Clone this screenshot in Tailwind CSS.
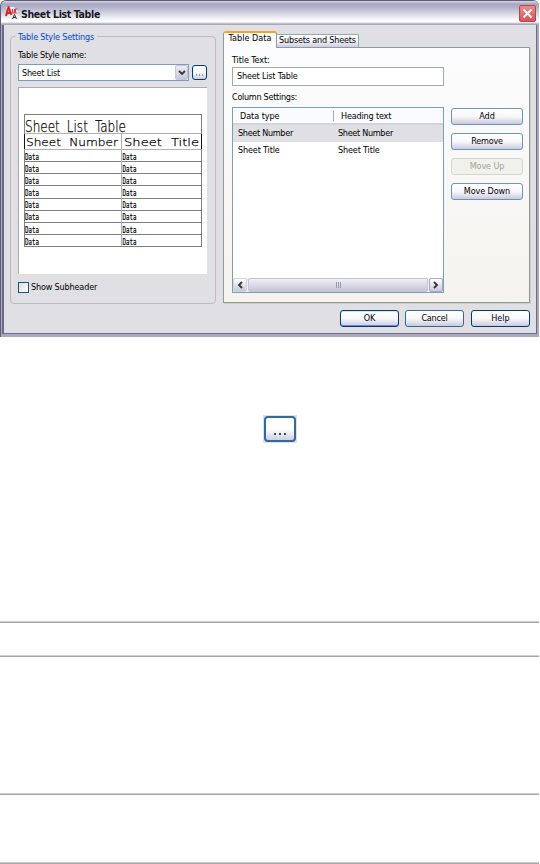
<!DOCTYPE html>
<html lang="en">
<head>
<meta charset="utf-8">
<title>Sheet List Table</title>
<script src="https://cdn.jsdelivr.net/npm/@tailwindcss/browser@4"></script>
</head>
<body class="w-[540px] h-[864px] bg-white overflow-hidden font-['DejaVu_Sans_Condensed','DejaVu_Sans',sans-serif] text-[9px] leading-[12px] text-black whitespace-nowrap">
<section class="w-[539px] h-[337px] bg-[#aaa8c0] border-t border-l border-[#5f5c78] rounded-t-[6px] flex flex-col">
  <header class="h-[24px] shrink-0 rounded-t-[5px] bg-[linear-gradient(#d9d9e6_0,#a6a6c2_3px,#b6b6cd_7px,#d8d8e4_13px,#f6f6fa_18px,#ffffff_21px,#a9a7bd_23px)] flex items-center pl-[4px] pr-[3px]">
    <svg class="w-[14px] h-[14px] shrink-0" viewBox="0 0 14 14">
      <path d="M1 1h8l4 4v8H5z" fill="#f1edf0"/>
      <path d="M1 10L3.500 1l3 8M2 7h4" fill="none" stroke="#d8202c" stroke-width="2"/>
      <path d="M7.500 3v4h2V3M12.500 3h-2v4h2" fill="none" stroke="#d8404a" stroke-width="1.200"/>
      <path d="M7.500 13l2-4.500 2 4.500M8 11.500h3" fill="none" stroke="#333" stroke-width="1"/>
    </svg>
    <h1 class="ml-[2px] mt-[2px] text-[10.500px] font-bold tracking-[-0.36px] text-[#17171f]">Sheet List Table</h1>
    <span class="ml-auto mt-[1px] w-[17px] h-[17px] rounded-[2px] border border-[#b5464f] bg-[linear-gradient(#e88b8b,#d95558)] flex items-center justify-center">
      <svg class="w-[11px] h-[11px]" viewBox="0 0 11 11"><path d="M1.500 1.500l8 8m0-8l-8 8" stroke="#fff" stroke-width="1.800"/></svg>
    </span>
  </header>
  <div class="h-[309px] ml-px mr-[2px] border-l-2 border-r border-b border-[#6c6a88] bg-[#e0dfe3] flex flex-col">
    <div class="flex h-[278px]">
      <fieldset class="relative ml-[6px] mt-[11px] w-[206px] h-[268px] border border-[#bfb8bf] rounded-[4px] pl-[7px] pt-[12px] flex flex-col">
        <span class="absolute left-[4px] top-[-6px] px-[3px] bg-[#e0dfe3] text-[#0046d5] tracking-[-0.17px]">Table Style Settings</span>
        <label class="tracking-[-0.22px]">Table Style name:</label>
        <div class="flex mt-[3px] gap-[3px]">
          <div class="w-[171px] h-[17px] border border-[#7f9db9] bg-white flex items-center pl-[3px]">
            <span class="tracking-[-0.22px]">Sheet List</span>
            <span class="ml-auto w-[13px] h-[15px] rounded-[2px] border border-[#c7c6d8] bg-[linear-gradient(#eeeef5,#c7c6da)] flex items-center justify-center"><svg class="w-[8px] h-[6px]" viewBox="0 0 8 6"><path d="M1 1l3 3 3-3" fill="none" stroke="#383840" stroke-width="1.900"/></svg></span>
          </div>
          <span class="w-[15px] h-[15px] mt-px rounded-[3px] border border-[#003c74] bg-[linear-gradient(#fff,#fff_45%,#cecddf)] flex items-center justify-center"><svg class="w-[7px] h-[2px] mt-[4px]" viewBox="0 0 7 2"><path d="M0 1h1m2 0h1m2 0h1" stroke="#444"/></svg></span>
        </div>
        <div class="mt-[6px] w-[189px] h-[187px] border-t border-l border-[#aaa8b0] bg-white">
          <svg class="w-[188px] h-[186px] fill-[#111]" viewBox="19 88 188 186">
            <g stroke="#808080" fill="none" shape-rendering="crispEdges">
              <path d="M24.500 246.500V114.500H201.500V246.500zM24 161.500h177M24 173.500h177M24 185.500h177M24 198.500h177M24 210.500h177M24 222.500h177M24 234.500h177"/>
              <path d="M24 133.500h177M24 149.500h177M121.500 134v112" stroke="#b0b0b0"/>
              <path d="M24.500 134v15M201.500 134v15" stroke="#111"/>
            </g>
            <g class="font-['DejaVu_Sans_Light','DejaVu_Sans'] font-extralight [word-spacing:4px]" fill="#000" stroke="#000" stroke-width=".25">
              <text x="25" y="131.500" font-size="15" textLength="101" lengthAdjust="spacingAndGlyphs">Sheet List Table</text>
              <text x="26" y="145.500" font-size="11" textLength="92" lengthAdjust="spacingAndGlyphs">Sheet Number</text>
              <text x="124" y="145.500" font-size="11" textLength="75" lengthAdjust="spacingAndGlyphs">Sheet Title</text>
            </g>
            <g class="font-['DejaVu_Sans_Mono',monospace]" font-size="8.500" fill="#000" stroke="#000" stroke-width=".2">
              <text x="25" y="159.500" textLength="14" lengthAdjust="spacingAndGlyphs">Data</text><text x="122.500" y="159.500" textLength="14" lengthAdjust="spacingAndGlyphs">Data</text>
              <text x="25" y="171.500" textLength="14" lengthAdjust="spacingAndGlyphs">Data</text><text x="122.500" y="171.500" textLength="14" lengthAdjust="spacingAndGlyphs">Data</text>
              <text x="25" y="183.500" textLength="14" lengthAdjust="spacingAndGlyphs">Data</text><text x="122.500" y="183.500" textLength="14" lengthAdjust="spacingAndGlyphs">Data</text>
              <text x="25" y="196" textLength="14" lengthAdjust="spacingAndGlyphs">Data</text><text x="122.500" y="196" textLength="14" lengthAdjust="spacingAndGlyphs">Data</text>
              <text x="25" y="208" textLength="14" lengthAdjust="spacingAndGlyphs">Data</text><text x="122.500" y="208" textLength="14" lengthAdjust="spacingAndGlyphs">Data</text>
              <text x="25" y="220" textLength="14" lengthAdjust="spacingAndGlyphs">Data</text><text x="122.500" y="220" textLength="14" lengthAdjust="spacingAndGlyphs">Data</text>
              <text x="25" y="232.500" textLength="14" lengthAdjust="spacingAndGlyphs">Data</text><text x="122.500" y="232.500" textLength="14" lengthAdjust="spacingAndGlyphs">Data</text>
              <text x="25" y="244.500" textLength="14" lengthAdjust="spacingAndGlyphs">Data</text><text x="122.500" y="244.500" textLength="14" lengthAdjust="spacingAndGlyphs">Data</text>
            </g>
          </svg>
        </div>
        <label class="mt-[7px] flex items-center gap-[2px]"><span class="w-[11px] h-[11px] border border-[#1c5180] bg-[linear-gradient(135deg,#dcdcd7,#fff)]"></span><span class="tracking-[-0.16px]">Show Subheader</span></label>
      </fieldset>
      <div class="ml-[7px] mt-[6px] w-[307px]">
        <div class="flex items-end h-[16px]">
          <span class="relative z-10 w-[54px] h-[17px] -mb-px rounded-t-[3px] border-x border-t-2 border-x-[#919b9c] border-t-[#f5a524] bg-[#fcfcfe] text-center leading-[11px] tracking-[0.03px]">Table Data</span>
          <span class="w-[82px] h-[13px] border-t border-r border-[#91a7b4] rounded-tr-[2px] bg-[linear-gradient(#fff,#f3f3fa_50%,#cdcce0)] text-center leading-[10px] tracking-[-0.18px]">Subsets and Sheets</span>
        </div>
        <div class="w-[307px] h-[256px] border border-[#919b9c] shadow-[1px_1px_0_#d0cebf] bg-[linear-gradient(#fcfcfe,#f4f3ee)] pl-[8px] pt-[6px] flex gap-[7px]">
          <div class="w-[212px]">
            <label class="block tracking-[-0.1px]">Title Text:</label>
            <div class="mt-px w-[212px] h-[19px] border border-[#a0a8a8] bg-white pl-[4px] leading-[16px] tracking-[-0.18px]">Sheet List Table</div>
            <label class="mt-[5px] block tracking-[-0.28px]">Column Settings:</label>
            <div class="mt-[4px] w-[212px] h-[186px] border border-[#7f9db9] bg-white flex flex-col">
              <div class="h-[17px] flex items-center bg-[#fafbfe] border-b-2 border-[#d3d3e0] pt-px"><span class="w-[100px] pl-[7px] tracking-[-0.05px]">Data type</span><span class="h-[10px] w-px bg-[#aaaab5]"></span><span class="pl-[7px] tracking-[-0.17px]">Heading text</span></div>
              <div class="h-[17px] leading-[17px] flex bg-[#e0dfe3] pl-[5px] tracking-[-0.3px]"><span class="w-[100px]">Sheet Number</span><span>Sheet Number</span></div>
              <div class="h-[17px] leading-[17px] flex pl-[5px] tracking-[-0.15px]"><span class="w-[100px]">Sheet Title</span><span>Sheet Title</span></div>
              <div class="mt-auto h-[14px] flex gap-px bg-[#eeeef4]">
                <span class="w-[14px] border border-[#d3d3df] rounded-[2px] bg-[linear-gradient(#fff,#c9c8da)] flex items-center justify-center"><svg class="w-[6px] h-[8px]" viewBox="0 0 6 8"><path d="M5 1L2 4l3 3" fill="none" stroke="#333" stroke-width="1.800"/></svg></span>
                <span class="flex-1 border border-[#c5c5d4] rounded-[2px] bg-[linear-gradient(#efeff5,#c6c5d6)] flex items-center justify-center gap-px"><i class="w-px h-[6px] bg-[#999ab0]"></i><i class="w-px h-[6px] bg-[#999ab0]"></i><i class="w-px h-[6px] bg-[#999ab0]"></i></span>
                <span class="w-[14px] border border-[#aaaac0] rounded-[2px] bg-[linear-gradient(#fff,#c9c8da)] flex items-center justify-center"><svg class="w-[6px] h-[8px]" viewBox="0 0 6 8"><path d="M1 1l3 3-3 3" fill="none" stroke="#333" stroke-width="1.800"/></svg></span>
              </div>
            </div>
          </div>
          <div class="flex flex-col gap-[8px] pt-[54px] text-center leading-[15px]">
            <button class="w-[72px] h-[17px] rounded-[3px] border border-[#6f93b3] bg-[linear-gradient(#fff,#f8f8fc_50%,#cbcadd)]">Add</button>
            <button class="w-[72px] h-[17px] rounded-[3px] border border-[#6f93b3] bg-[linear-gradient(#fff,#f8f8fc_50%,#cbcadd)] tracking-[-0.2px]">Remove</button>
            <button class="w-[72px] h-[17px] rounded-[3px] border border-[#d5d5cb] bg-[#f1f1ec] text-[#a1a192] tracking-[-0.1px]">Move Up</button>
            <button class="w-[72px] h-[17px] rounded-[3px] border border-[#6f93b3] bg-[linear-gradient(#fff,#f8f8fc_50%,#cbcadd)] tracking-[-0.1px]">Move Down</button>
          </div>
        </div>
      </div>
    </div>
    <div class="mt-[7px] flex gap-[6px] pl-[336px] leading-[15px]">
      <button class="w-[59px] h-[17px] rounded-[3px] border border-[#003c74] shadow-[inset_0_-1px_0_#7386dd,inset_0_1px_0_#cee7ff] bg-[linear-gradient(#fff,#f8f8fc_50%,#cbcadd)]">OK</button>
      <button class="w-[59px] h-[17px] rounded-[3px] border border-[#356894] bg-[linear-gradient(#fff,#f8f8fc_50%,#cbcadd)] tracking-[-0.2px]">Cancel</button>
      <button class="ml-px w-[59px] h-[17px] rounded-[3px] border border-[#003c74] bg-[linear-gradient(#fff,#f8f8fc_50%,#cbcadd)]">Help</button>
    </div>
  </div>
</section>
<div class="mt-[78px] ml-[263px] w-[34px] h-[28px] bg-[#e0dfe8] p-px"><div class="w-[32px] h-[26px] rounded-[4px] border-2 border-[#336a9c] bg-[linear-gradient(#fff_50%,#d0cfe0)] flex justify-center items-end pb-[5px] gap-[3px]"><i class="size-[2px] bg-[#444454]"></i><i class="size-[2px] bg-[#444454]"></i><i class="size-[2px] bg-[#444454]"></i></div></div>
<hr class="mt-[178px] w-[539px] h-[2px] border-0 border-t border-[#cfcfcf] bg-[#a6a6a6]">
<hr class="mt-[32px] w-[539px] h-[2px] border-0 border-t border-[#cfcfcf] bg-[#a6a6a6]">
<hr class="mt-[136px] w-[539px] h-[2px] border-0 border-t border-[#cfcfcf] bg-[#a6a6a6]">
<hr class="mt-[67px] w-[539px] h-[2px] border-0 border-t border-[#cfcfcf] bg-[#a6a6a6]">
</body>
</html>
